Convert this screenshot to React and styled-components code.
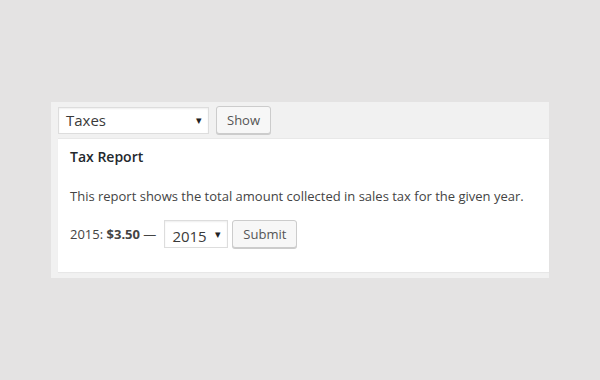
import React from "react";
import styled, { createGlobalStyle } from "styled-components";

const Global = createGlobalStyle`
  html, body {
    margin: 0;
    padding: 0;
    background: #e4e3e3;
    font-family: "Open Sans", "Liberation Sans", sans-serif;
    color: #444;
  }
`;

const Page = styled.div`
  width: 600px;
  height: 380px;
  padding: 102px 51px 0 51px;
  box-sizing: border-box;
`;

const Panel = styled.div`
  width: 498px;
  background: #f1f1f1;
  padding: 0 0 6px 7px;
  box-sizing: border-box;
`;

const Toolbar = styled.div`
  display: flex;
  align-items: center;
  gap: 7px;
  height: 36px;
`;

const SelectBox = styled.div`
  display: flex;
  align-items: center;
  justify-content: space-between;
  box-sizing: border-box;
  width: ${(p) => p.$w}px;
  height: ${(p) => p.$h}px;
  padding: 0 6px 0 ${(p) => p.$pl}px;
  background: #fff;
  border: 1px solid #ddd;
  box-shadow: inset 0 1px 2px rgba(0, 0, 0, 0.07);
  font-size: 15px;
  color: #3a3a3a;
`;

const Value = styled.span`
  margin-top: ${(p) => p.$mt || 0}px;
`;

const Arrow = styled.span`
  font-size: 11px;
  color: #222;
  margin-top: -2px;
`;

const Button = styled.div`
  display: flex;
  align-items: center;
  justify-content: center;
  box-sizing: border-box;
  width: ${(p) => p.$w}px;
  height: 28px;
  background: #f7f7f7;
  border: 1px solid #ccc;
  border-radius: 3px;
  box-shadow: 0 1px 0 #ccc;
  font-size: 13px;
  color: #555;
`;

const Card = styled.div`
  background: #fff;
  height: 134px;
  box-sizing: border-box;
  padding: 8px 12px 0 12px;
  border-top: 1px solid #e8e8e8;
  box-shadow: 0 1px 1px rgba(0, 0, 0, 0.04);
`;

const Title = styled.h2`
  margin: 0;
  font-size: 14px;
  font-weight: 600;
  color: #23282d;
  line-height: 20px;
`;

const Text = styled.p`
  margin: 19px 0 0 0;
  font-size: 13px;
  line-height: 20px;
  color: #444;
`;

const Row = styled.div`
  display: flex;
  align-items: center;
  gap: 4px;
  margin-top: 14px;
  font-size: 13px;
  color: #444;
`;

const Label = styled.span`
  margin-right: 4px;
`;

export default function App() {
  return (
    <Page>
      <Global />
      <Panel>
        <Toolbar>
          <SelectBox $w={151} $h={27} $pl={7}>
            <Value>Taxes</Value>
            <Arrow>▾</Arrow>
          </SelectBox>
          <Button $w={55}>Show</Button>
        </Toolbar>
        <Card>
          <Title>Tax Report</Title>
          <Text>This report shows the total amount collected in sales tax for the given year.</Text>
          <Row>
            <Label>
              2015: <b>$3.50</b> —
            </Label>
            <SelectBox $w={64} $h={28} $pl={7}>
              <Value $mt={3}>2015</Value>
              <Arrow>▾</Arrow>
            </SelectBox>
            <Button $w={65}>Submit</Button>
          </Row>
        </Card>
      </Panel>
    </Page>
  );
}
